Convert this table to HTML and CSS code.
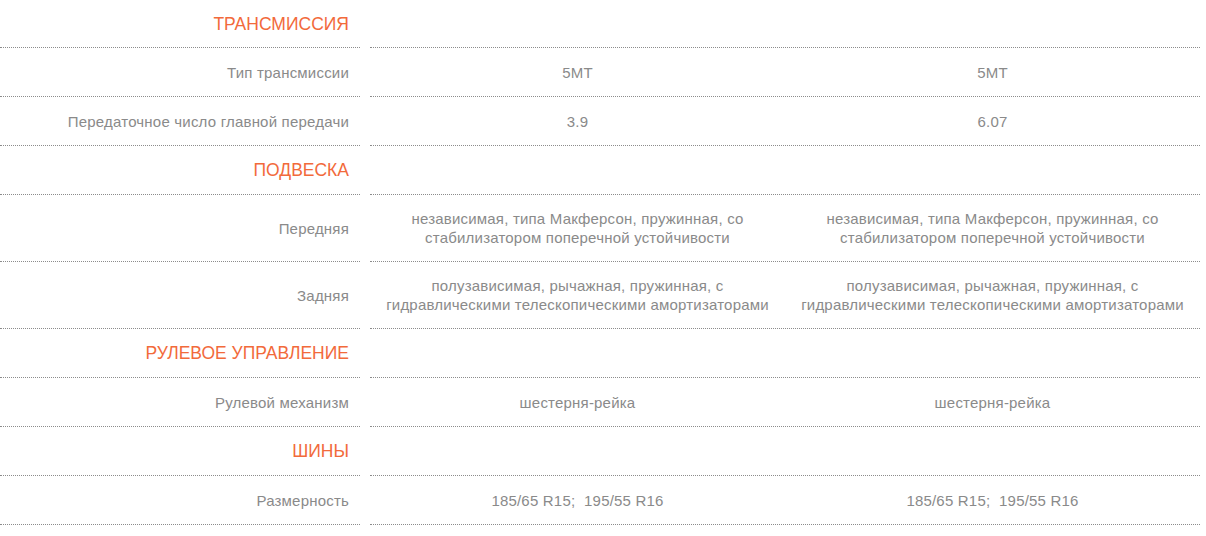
FILE: index.html
```html
<!DOCTYPE html>
<html lang="ru">
<head>
<meta charset="utf-8">
<link rel="stylesheet" href="styles.css">
</head>
<body>
<div class="specs">
  <div class="row head first">
    <div class="label">ТРАНСМИССИЯ</div>
    <div class="vals"><div class="val"></div><div class="val"></div></div>
  </div>
  <div class="row">
    <div class="label">Тип трансмиссии</div>
    <div class="vals"><div class="val">5MT</div><div class="val">5MT</div></div>
  </div>
  <div class="row">
    <div class="label">Передаточное число главной передачи</div>
    <div class="vals"><div class="val">3.9</div><div class="val">6.07</div></div>
  </div>
  <div class="row head">
    <div class="label">ПОДВЕСКА</div>
    <div class="vals"><div class="val"></div><div class="val"></div></div>
  </div>
  <div class="row tall">
    <div class="label">Передняя</div>
    <div class="vals"><div class="val">независимая, типа Макферсон, пружинная, со стабилизатором поперечной устойчивости</div><div class="val">независимая, типа Макферсон, пружинная, со стабилизатором поперечной устойчивости</div></div>
  </div>
  <div class="row tall">
    <div class="label">Задняя</div>
    <div class="vals"><div class="val">полузависимая, рычажная, пружинная, с гидравлическими телескопическими амортизаторами</div><div class="val">полузависимая, рычажная, пружинная, с гидравлическими телескопическими амортизаторами</div></div>
  </div>
  <div class="row head">
    <div class="label">РУЛЕВОЕ УПРАВЛЕНИЕ</div>
    <div class="vals"><div class="val"></div><div class="val"></div></div>
  </div>
  <div class="row">
    <div class="label">Рулевой механизм</div>
    <div class="vals"><div class="val">шестерня-рейка</div><div class="val">шестерня-рейка</div></div>
  </div>
  <div class="row head">
    <div class="label">ШИНЫ</div>
    <div class="vals"><div class="val"></div><div class="val"></div></div>
  </div>
  <div class="row">
    <div class="label">Размерность</div>
    <div class="vals"><div class="val">185/65 R15;&nbsp; 195/55 R16</div><div class="val">185/65 R15;&nbsp; 195/55 R16</div></div>
  </div>
</div>
</body>
</html>
```
FILE: styles.css
```css
html, body {
  margin: 0;
  padding: 0;
  background: #fff;
}
body {
  font-family: "Liberation Sans", Arial, sans-serif;
  font-size: 15px;
  letter-spacing: 0.2px;
  color: #8a8a8a;
}
.specs {
  width: 1200px;
}
.row {
  display: flex;
  height: 49px;
}
.row.first {
  height: 48px;
}
.row.tall {
  height: 67px;
}
.label {
  width: 349px;
  padding-right: 11px;
  margin-right: 10px;
  border-bottom: 1px dotted #8c8c8c;
  display: flex;
  align-items: center;
  justify-content: flex-end;
  text-align: right;
  line-height: 19px;
}
.head .label {
  color: #f26a3b;
  font-size: 17.5px;
  letter-spacing: 0;
  text-transform: uppercase;
}
.first .label {
  padding-top: 1px;
}
.vals {
  flex: 1;
  display: flex;
  border-bottom: 1px dotted #8c8c8c;
}
.val {
  width: 415px;
  display: flex;
  align-items: center;
  justify-content: center;
  text-align: center;
  line-height: 19px;
  padding: 0 8px;
  box-sizing: border-box;
}
```
